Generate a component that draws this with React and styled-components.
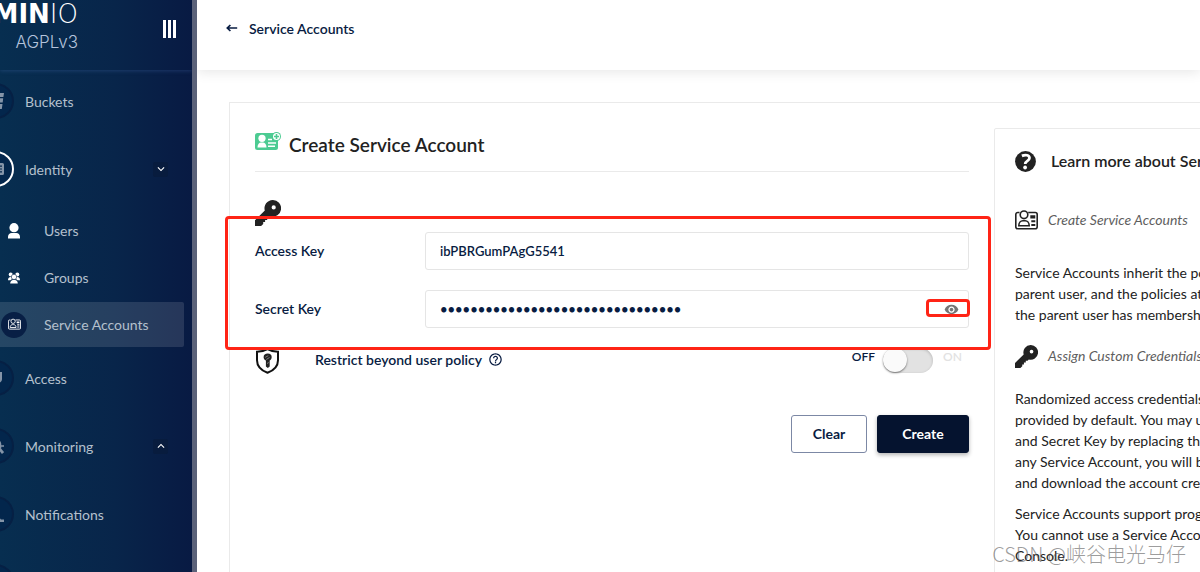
import React from "react";
import styled, { createGlobalStyle, css } from "styled-components";
import {
  MdVisibility,
  MdHelpOutline,
  MdKeyboardArrowDown,
  MdKeyboardArrowUp,
} from "react-icons/md";

function App() {
  return (
    <>
      <GlobalStyle />
      <Shell>
        <Sidebar />
        <Main>
          <PageHeader>
            <BackLink href="#accounts">
              <ArrowIcon />
              Service Accounts
            </BackLink>
          </PageHeader>
          <Card>
            <CreateForm />
            <HelpBox />
          </Card>
        </Main>
        <Watermark>CSDN @峡谷电光马仔</Watermark>
      </Shell>
    </>
  );
}

export default App;

function Sidebar() {
  return (
    <SidebarContainer>
      <SidebarHeader>
        <Brand>
          <BrandName>
            MIN<span>IO</span>
          </BrandName>
          <License>AGPLv3</License>
        </Brand>
        <MenuButton type="button" aria-label="Toggle menu">
          <i />
          <i />
          <i />
        </MenuButton>
      </SidebarHeader>
      <Nav>
        <NavItem href="#buckets">
          <NavCircle>
            <BucketIcon />
          </NavCircle>
          Buckets
        </NavItem>
        <NavItem href="#identity" $open>
          <NavCircle $active>
            <IdentityIcon />
          </NavCircle>
          Identity
          <Chevron>
            <MdKeyboardArrowDown />
          </Chevron>
        </NavItem>
        <SubNav>
          <SubItem href="#users">
            <SubCircle>
              <UserIcon />
            </SubCircle>
            Users
          </SubItem>
          <SubItem href="#groups">
            <SubCircle>
              <GroupIcon />
            </SubCircle>
            Groups
          </SubItem>
          <SubItem href="#accounts" $selected>
            <SubCircle $selected>
              <AccountIcon size={13} />
            </SubCircle>
            Service Accounts
          </SubItem>
        </SubNav>
        <NavItem href="#access">
          <NavCircle>
            <AccessIcon />
          </NavCircle>
          Access
        </NavItem>
        <NavItem href="#monitoring">
          <NavCircle>
            <MonitoringIcon />
          </NavCircle>
          Monitoring
          <Chevron>
            <MdKeyboardArrowUp />
          </Chevron>
        </NavItem>
        <NavItem href="#notifications">
          <NavCircle>
            <BellIcon />
          </NavCircle>
          Notifications
        </NavItem>
        <NavItem href="#tiers">
          <NavCircle />
          Tiers
        </NavItem>
      </Nav>
    </SidebarContainer>
  );
}

function CreateForm() {
  return (
    <Form onSubmit={(e) => e.preventDefault()}>
      <FormTitle>
        <NewAccountIcon />
        <h1>Create Service Account</h1>
      </FormTitle>
      <KeyIconRow>
        <KeyIcon size={26} />
      </KeyIconRow>
      <Credentials>
        <Field>
          <label htmlFor="accessKey">Access Key</label>
          <InputWrapper>
            <Input id="accessKey" type="text" defaultValue="ibPBRGumPAgG5541" />
          </InputWrapper>
        </Field>
        <Field>
          <label htmlFor="secretKey">Secret Key</label>
          <InputWrapper>
            <Input
              id="secretKey"
              type="password"
              defaultValue="abcdefghijklmnopqrstuvwxyz012345"
            />
            <EyeButton type="button" aria-label="Show secret key">
              <MdVisibility />
            </EyeButton>
            <EyeMark />
          </InputWrapper>
        </Field>
        <CredentialsMark />
      </Credentials>
      <PolicyRow>
        <ShieldIcon />
        <PolicyLabel htmlFor="restrict">
          Restrict beyond user policy
          <MdHelpOutline />
        </PolicyLabel>
        <SwitchText>OFF</SwitchText>
        <Switch id="restrict" type="checkbox" />
        <SwitchText $muted>ON</SwitchText>
      </PolicyRow>
      <Actions>
        <Button type="reset">Clear</Button>
        <Button type="submit" $primary>
          Create
        </Button>
      </Actions>
    </Form>
  );
}

function HelpBox() {
  return (
    <HelpContainer>
      <HelpTitle>
        <HelpIcon />
        <h2>Learn more about Service Accounts</h2>
      </HelpTitle>
      <HelpHeading>
        <AccountIcon size={23} />
        <span>Create Service Accounts</span>
      </HelpHeading>
      <HelpText>
        Service Accounts inherit the policies explicitly attached to the
        <br />
        parent user, and the policies attached to each group in which
        <br />
        the parent user has membership.
      </HelpText>
      <HelpHeading>
        <KeyIcon size={23} />
        <span>Assign Custom Credentials</span>
      </HelpHeading>
      <HelpText>
        Randomized access credentials are recommended, and
        <br />
        provided by default. You may use your own custom Access Key
        <br />
        and Secret Key by replacing the default values. After creating
        <br />
        any Service Account, you will be given the option to view
        <br />
        and download the account credentials.
      </HelpText>
      <HelpText>
        Service Accounts support programmatic access by applications.
        <br />
        You cannot use a Service Account to log into the MinIO
        <br />
        Console.
      </HelpText>
    </HelpContainer>
  );
}

/* icons */

const ArrowIcon = () => (
  <svg width="12" height="8" viewBox="0 0 12 8" fill="none">
    <path d="M11.2 4H1.5M4.4 1L1.3 4l3.1 3" stroke="#081c42" strokeWidth="1.7" />
  </svg>
);

const BucketIcon = () => (
  <svg width="16" height="16" viewBox="0 0 16 16" fill="currentColor">
    <path d="M0 0h16l-.6 4H.6zM.8 5.300h14.400l-.5 4.200H1.300zM1.500 11h13l-.7 5H2.200z" />
  </svg>
);

const IdentityIcon = () => (
  <svg width="16" height="12" viewBox="0 0 16 12" fill="currentColor">
    <path
      fillRule="evenodd"
      d="M1.500 0h13A1.500 1.500 0 0 1 16 1.500v9a1.500 1.500 0 0 1-1.500 1.500h-13A1.500 1.500 0 0 1 0 10.500v-9A1.500 1.500 0 0 1 1.500 0zM9 2.500v1.200h5V2.500zM9 5.400v1.200h5V5.400zM9 8.300v1.200h5V8.300z"
    />
  </svg>
);

const UserIcon = () => (
  <svg width="12" height="16" viewBox="0 0 12 16" fill="currentColor">
    <circle cx="6" cy="4.700" r="4.600" />
    <path d="M0 15.500v-1.700C0 11.500 1.800 10 3.600 10h4.800c1.800 0 3.600 1.500 3.600 3.800v1.700z" />
  </svg>
);

const GroupIcon = () => (
  <svg width="12" height="12" viewBox="0 0 12 12" fill="currentColor">
    <circle cx="2.700" cy="2.600" r="2" />
    <circle cx="9.300" cy="2.600" r="2" />
    <path d="M0 8.200C0 6 1.200 5 2.600 5h6.800C10.800 5 12 6 12 8.200H9.500L8 7H4L2.500 8.200z" />
    <circle cx="6" cy="4.900" r="2.700" stroke="#072549" strokeWidth=".6" />
    <path d="M2.200 11.500C2.200 9.200 3.700 8 5 8h2c1.300 0 2.800 1.200 2.800 3.500z" />
  </svg>
);

const AccountIcon = ({ size }) => (
  <svg width={size} height={size} viewBox="0 0 23 23" fill="none">
    <path
      d="M4.500 3.500H2.800a2 2 0 0 0-2 2v12.200a2 2 0 0 0 2 2h17.400a2 2 0 0 0 2-2V5.500a2 2 0 0 0-2-2h-7"
      stroke="currentColor"
      strokeWidth="1.600"
    />
    <circle cx="9" cy="5.800" r="3.800" stroke="currentColor" strokeWidth="1.600" />
    <path
      d="M3.800 16.800c0-3.300 2-5 4-5h2.400c2 0 4 1.700 4 5z"
      stroke="currentColor"
      strokeWidth="1.600"
    />
    <path d="M15.300 6.300h5v3.200h-5zM16.300 11.200h4v2h-4zM16.300 15h4v2h-4z" fill="currentColor" />
  </svg>
);

const AccessIcon = () => (
  <svg width="12" height="12" viewBox="0 0 12 12" fill="currentColor">
    <path d="M0 0h12v7c0 2.500-2 4.300-6 5-4-.7-6-2.500-6-5z" />
  </svg>
);

const MonitoringIcon = () => (
  <svg width="16" height="16" viewBox="0 0 16 16" fill="none" stroke="currentColor">
    <path d="M3 7a4.500 4.500 0 0 1 9-1v3H6" strokeWidth="2.500" />
    <path d="M10 9l5 6" strokeWidth="2.800" />
    <path d="M11 8h5" strokeWidth="1.500" />
  </svg>
);

const BellIcon = () => (
  <svg width="16" height="16" viewBox="0 0 16 16" fill="currentColor">
    <path d="M7 0c3 0 4 2.500 4 5 0 5 .5 7 2 8.500h3V16H0v-2.500c2-1.500 3-3.500 3-8.500 0-2.500 1-5 4-5z" />
  </svg>
);

const KeyIcon = ({ size }) => (
  <svg width={size} height={size} viewBox="0 0 26 26" fill="#222">
    <path
      fillRule="evenodd"
      d="M17.700 0a8.300 8.300 0 1 1-2.100 16.300l-1.400 1.500h-2v2.100h-2.100v2.200H8.200v1.800L6.100 26H0v-5.700l9.800-9.700A8.300 8.300 0 0 1 17.700 0zM18.700 5.300a2.100 2.100 0 1 0 0 4.200 2.100 2.100 0 0 0 0-4.200z"
    />
  </svg>
);

const NewAccountIcon = () => (
  <svg width="26" height="18" viewBox="0 0 26 18">
    <rect y="1" width="23" height="17" rx="2.500" fill="#4ccb92" />
    <circle cx="7" cy="6.300" r="3.600" fill="#fff" />
    <path d="M2.500 15.500c0-3.200 1.800-5 3.500-5h2c1.700 0 3.500 1.800 3.500 5z" fill="#fff" />
    <path d="M13 7.500h4M13 11h8M13 14.300h7" stroke="#fff" strokeWidth="1.500" />
    <circle cx="21.500" cy="4.500" r="4.500" fill="#4ccb92" />
    <circle cx="21.500" cy="4.500" r="3.500" fill="#fff" />
    <path d="M21.500 2v5M19 4.500h5" stroke="#4ccb92" strokeWidth="1.600" />
  </svg>
);

const ShieldIcon = () => (
  <svg width="25" height="26" viewBox="0 0 25 26" fill="none">
    <path
      d="M12.500 1.200c3 1.800 6.500 2.600 10.500 2.600v8.400c0 5.500-3.800 10-10.500 12.600C5.800 22.200 2 17.700 2 12.200V3.800c4 0 7.500-.8 10.500-2.600z"
      stroke="#111"
      strokeWidth="2"
    />
    <path
      d="M12.800 5.600c2.500 0 3.900 1.400 3.900 3.400 0 1.700-1 2.900-2 3.400v6l-1.900 1.500-1.900-1.500v-6C9.600 11.800 8.600 10.800 8.600 9.200c0-2.200 1.600-3.600 4.200-3.600z"
      fill="#222"
    />
    <path d="M10.300 9.300l3-1.600M11.300 11.500l3.200-2M12 15.500l1.800-1" stroke="#bbb" strokeWidth=".6" />
  </svg>
);

const HelpIcon = () => (
  <svg width="21" height="21" viewBox="0 0 21 21" fill="none">
    <circle cx="10.500" cy="10.500" r="10.400" fill="#222" />
    <path
      d="M6.900 4.900c3.600-1.600 7.600-.9 7.600 2.200 0 2.900-4.300 2.600-4.300 5.900"
      stroke="#fff"
      strokeWidth="2.800"
    />
    <circle cx="10.100" cy="16.500" r="1.900" fill="#fff" />
  </svg>
);

/* styles */

const GlobalStyle = createGlobalStyle`
  * {
    box-sizing: border-box;
  }

  body {
    margin: 0;
    background: #fff;
    color: #081c42;
    font-family: Lato, "Liberation Sans", sans-serif;
    font-size: 14px;
  }

  a {
    color: inherit;
    text-decoration: none;
  }
`;

const Shell = styled.div`
  position: relative;
  display: flex;
  height: 100vh;
  overflow: hidden;
`;

const SidebarContainer = styled.aside`
  flex: 0 0 197px;
  overflow: hidden;
  border-right: 5px solid #5b6279;
  background: linear-gradient(90deg, #072e50 0%, #08254a 60%, #081a43 100%);
`;

const SidebarHeader = styled.header`
  display: flex;
  justify-content: space-between;
  height: 70px;
  padding-right: 16px;
  box-shadow: 0 1px 4px rgba(80, 120, 190, 0.3);
`;

const Brand = styled.div`
  display: flex;
  flex-direction: column;
  align-items: flex-end;
  width: 78px;
`;

const BrandName = styled.div`
  color: #fff;
  font-family: "DejaVu Sans", sans-serif;
  font-size: 26px;
  font-weight: 700;
  line-height: 28px;

  span {
    font-weight: 200;
  }
`;

const License = styled.div`
  color: #b4c3db;
  font-family: Inter, sans-serif;
  font-size: 17px;
  font-weight: 300;
  line-height: 28px;
`;

const MenuButton = styled.button`
  display: flex;
  gap: 2px;
  height: 18px;
  margin-top: 20px;
  padding: 0;
  border: 0;
  background: none;

  i {
    width: 3px;
    height: 18px;
    background: #fff;
  }
`;

const Nav = styled.nav`
  display: flex;
  flex-direction: column;
  margin-left: -22px;
  padding-top: 13px;
`;

const NavItem = styled.a`
  display: flex;
  flex-shrink: 0;
  align-items: center;
  gap: 11px;
  height: 36px;
  margin-bottom: ${({ $open }) => ($open ? "21px" : "32px")};
  padding-right: 24px;
  color: #b4c0cd;
`;

const NavCircle = styled.span`
  display: flex;
  align-items: center;
  justify-content: center;
  width: 36px;
  height: 36px;
  border: 2px solid ${({ $active }) => ($active ? "#fff" : "#062044")};
  border-radius: 50%;
  background: #03264c;
  color: #8494a8;
`;

const Chevron = styled.span`
  display: flex;
  align-items: center;
  justify-content: center;
  width: 15px;
  height: 15px;
  margin-left: auto;
  border-radius: 2px;
  background: #081c3e;
  color: #fff;
  font-size: 14px;
`;

const SubNav = styled.div`
  display: flex;
  flex-direction: column;
  gap: 2px;
  margin: 0 8px 13px 22px;
`;

const SubItem = styled.a`
  display: flex;
  align-items: center;
  gap: 17px;
  height: 45px;
  padding-left: 1px;
  border-radius: 0 2px 2px 0;
  color: #b4c0cd;
  ${({ $selected }) =>
    $selected &&
    css`
      background: rgba(255, 255, 255, 0.12);
    `}
`;

const SubCircle = styled.span`
  display: flex;
  align-items: center;
  justify-content: center;
  width: 26px;
  height: 26px;
  border-radius: 50%;
  background: ${({ $selected }) => ($selected ? "#081f45" : "none")};
  color: #fff;
`;

const Main = styled.main`
  flex: 1;
  min-width: 0;
  overflow: hidden;
`;

const PageHeader = styled.header`
  display: flex;
  align-items: center;
  height: 70px;
  padding: 0 29px 14px;
  box-shadow: 0 2px 12px rgba(0, 0, 0, 0.1);
`;

const BackLink = styled.a`
  display: flex;
  align-items: center;
  gap: 11px;
  font-weight: 600;
`;

/* wider than the window, the help column runs off the right edge */
const Card = styled.section`
  display: flex;
  gap: 25px;
  margin: 32px -258px 0 32px;
  padding: 25px;
  border: 1px solid #eaeaea;
`;

const Form = styled.form`
  flex: 1;
  min-width: 0;
`;

const FormTitle = styled.div`
  display: flex;
  align-items: center;
  gap: 8px;
  height: 44px;
  padding-bottom: 10px;
  border-bottom: 1px solid #eaeaea;
  color: #222;

  svg {
    margin-bottom: 8px;
  }

  h1 {
    margin: 0;
    font-size: 19px;
    font-weight: 600;
  }
`;

const KeyIconRow = styled.div`
  display: flex;
  padding: 28px 0 6px;
`;

const Credentials = styled.div`
  position: relative;
  display: flex;
  flex-direction: column;
  gap: 20px;
`;

const Field = styled.div`
  display: flex;
  align-items: center;

  label {
    width: 170px;
    padding-bottom: 2px;
    font-weight: 600;
  }
`;

const InputWrapper = styled.div`
  position: relative;
  flex: 1;
`;

const Input = styled.input`
  display: block;
  width: 100%;
  height: 38px;
  padding: 0 40px 0 14px;
  border: 1px solid #e5e5e5;
  border-radius: 3px;
  outline: none;
  background: #fff;
  color: #081c42;
  font-family: inherit;
  font-size: 13px;
  font-weight: 600;
`;

const EyeButton = styled.button`
  position: absolute;
  top: 12px;
  right: 10px;
  display: flex;
  padding: 0;
  border: 0;
  background: none;
  color: #757575;
  font-size: 15px;
`;

const Mark = styled.span`
  position: absolute;
  border: 3px solid #ff2416;
  border-radius: 4px;
  pointer-events: none;
`;

const EyeMark = styled(Mark)`
  top: 9px;
  right: -1px;
  width: 44px;
  height: 18px;
`;

const CredentialsMark = styled(Mark)`
  top: -16px;
  right: -22px;
  bottom: -22px;
  left: -30px;
`;

const PolicyRow = styled.div`
  display: flex;
  align-items: center;
  height: 26px;
  margin-top: 20px;
`;

const PolicyLabel = styled.label`
  display: flex;
  align-items: center;
  gap: 6px;
  margin: 0 auto 0 35px;
  padding-bottom: 4px;
  font-weight: 600;

  svg {
    font-size: 15px;
  }
`;

const SwitchText = styled.span`
  width: ${({ $muted }) => ($muted ? "26px" : "auto")};
  padding-bottom: 10px;
  color: ${({ $muted }) => ($muted ? "#e2e2e2" : "#081c42")};
  font-size: 12px;
  font-weight: 600;
`;

const Switch = styled.input`
  appearance: none;
  width: 50px;
  height: 25px;
  margin: 0 10px 2px 8px;
  border-radius: 13px;
  background: #e2e2e2;
  box-shadow: inset 0 1px 3px rgba(0, 0, 0, 0.2);

  &::before {
    content: "";
    display: block;
    width: 24px;
    height: 24px;
    border-radius: 50%;
    background: #fafafa;
    box-shadow: 0 1px 2px rgba(0, 0, 0, 0.5);
  }

  &:checked::before {
    margin-left: 26px;
  }
`;

const Actions = styled.div`
  display: flex;
  justify-content: flex-end;
  gap: 10px;
  margin-top: 41px;
`;

const Button = styled.button`
  width: 76px;
  height: 38px;
  padding: 0 0 2px;
  border: 1px solid #7c88a5;
  border-radius: 3px;
  background: #fff;
  color: #081c42;
  font-family: inherit;
  font-size: 14px;
  font-weight: 700;
  ${({ $primary }) =>
    $primary &&
    css`
      width: 92px;
      border-color: #05132f;
      background: #05132f;
      box-shadow: 0 2px 4px rgba(0, 0, 0, 0.3);
      color: #fff;
    `}
`;

const HelpContainer = styled.aside`
  flex: 0 0 438px;
  padding: 20px;
  border: 1px solid #eaeaea;
  border-radius: 2px;
  color: #222;
`;

const HelpTitle = styled.div`
  display: flex;
  align-items: center;
  gap: 15px;
  height: 24px;
  margin-bottom: 36px;

  h2 {
    margin: 0;
    padding-bottom: 2px;
    font-size: 16px;
    font-weight: 600;
  }
`;

const HelpHeading = styled.h3`
  display: flex;
  align-items: center;
  gap: 10px;
  height: 22px;
  margin: 0 0 31px;
  color: #5e5e5e;
  font-size: 14px;
  font-style: italic;
  font-weight: 400;

  svg {
    color: #222;
  }

  span {
    padding-bottom: 2px;
  }

  p + & {
    margin: 20px 0 21px;
  }
`;

const HelpText = styled.p`
  margin: 0 0 10px;
  line-height: 21px;
`;

const Watermark = styled.div`
  position: absolute;
  right: 14px;
  bottom: 4px;
  color: rgba(90, 90, 90, 0.6);
  font-family: "Noto Sans CJK SC", sans-serif;
  font-size: 20px;
  font-weight: 300;
  line-height: 28px;
`;
